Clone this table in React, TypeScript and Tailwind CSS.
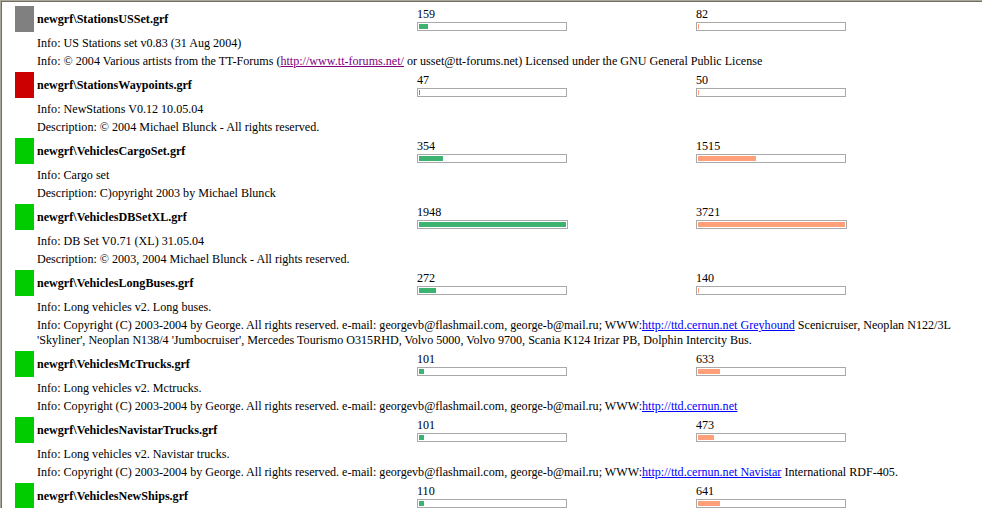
const CERNUN = 'Info: Copyright (C) 2003-2004 by George. All rights reserved. e-mail: georgevb@flashmail.com, george-b@mail.ru; WWW:';

type Entry = {
  name: string;
  status: string;
  a: number;
  aw: number;
  b: number;
  bw: number;
  info: React.ReactNode[];
};

const entries: Entry[] = [
  {
    name: 'newgrf\\StationsUSSet.grf', status: 'bg-[#808080]', a: 159, aw: 9, b: 82, bw: 1,
    info: [
      'Info: US Stations set v0.83 (31 Aug 2004)',
      <>
        Info: © 2004 Various artists from the TT-Forums (
        <a href="#" className="text-[#800080] underline">http://www.tt-forums.net/</a> or usset@tt-forums.net) Licensed under the GNU General Public License
      </>,
    ],
  },
  {
    name: 'newgrf\\StationsWaypoints.grf', status: 'bg-[#cc0000]', a: 47, aw: 1, b: 50, bw: 1,
    info: ['Info: NewStations V0.12 10.05.04', 'Description: © 2004 Michael Blunck - All rights reserved.'],
  },
  {
    name: 'newgrf\\VehiclesCargoSet.grf', status: 'bg-[#00cc00]', a: 354, aw: 24, b: 1515, bw: 58,
    info: ['Info: Cargo set', 'Description: C)opyright 2003 by Michael Blunck'],
  },
  {
    name: 'newgrf\\VehiclesDBSetXL.grf', status: 'bg-[#00cc00]', a: 1948, aw: 147, b: 3721, bw: 147,
    info: ['Info: DB Set V0.71 (XL) 31.05.04', 'Description: © 2003, 2004 Michael Blunck - All rights reserved.'],
  },
  {
    name: 'newgrf\\VehiclesLongBuses.grf', status: 'bg-[#00cc00]', a: 272, aw: 17, b: 140, bw: 1,
    info: [
      'Info: Long vehicles v2. Long buses.',
      <>
        {CERNUN}
        <a href="#" className="text-[#0000ff] underline">http://ttd.cernun.net Greyhound</a> Scenicruiser, Neoplan N122/3L 'Skyliner', Neoplan N138/4 'Jumbocruiser', Mercedes Tourismo O315RHD, Volvo 5000, Volvo 9700, Scania K124 Irizar PB, Dolphin Intercity Bus.
      </>,
    ],
  },
  {
    name: 'newgrf\\VehiclesMcTrucks.grf', status: 'bg-[#00cc00]', a: 101, aw: 5, b: 633, bw: 22,
    info: [
      'Info: Long vehicles v2. Mctrucks.',
      <>
        {CERNUN}
        <a href="#" className="text-[#0000ff] underline">http://ttd.cernun.net</a>
      </>,
    ],
  },
  {
    name: 'newgrf\\VehiclesNavistarTrucks.grf', status: 'bg-[#00cc00]', a: 101, aw: 5, b: 473, bw: 16,
    info: [
      'Info: Long vehicles v2. Navistar trucks.',
      <>
        {CERNUN}
        <a href="#" className="text-[#0000ff] underline">http://ttd.cernun.net Navistar</a> International RDF-405.
      </>,
    ],
  },
  {
    name: 'newgrf\\VehiclesNewShips.grf', status: 'bg-[#00cc00]', a: 110, aw: 5, b: 641, bw: 22,
    info: ['Info: Long vehicles v2. Ships.', CERNUN],
  },
];

const Bar = ({ value, fill, color }: { value: number; fill: number; color: string }) => (
  <div className="flex flex-col items-start">
    <span className="leading-[15px]">{value}</span>
    <div className="flex min-w-[150px] h-[9px] border border-[#a9a9a9] p-px">
      <div className={`h-[5px] shrink-0 ${color}`} style={{ width: fill }} />
    </div>
  </div>
);

export default function App() {
  return (
    <div className="h-[508px] w-[982px] overflow-hidden border-t border-l border-[#aca899] bg-white">
      <div className="h-full border-t border-l border-[#716f64] pl-[13px] pr-[30px] pt-[2px] font-['Liberation_Serif',serif] text-[12.1px] text-black">
        {entries.map((e) => (
          <div key={e.name} className="grid grid-cols-[22px_380px_279px_1fr]">
            <div className="flex h-[30px] items-start pt-[2px]">
              <div className={`h-[26px] w-[19px] ${e.status}`} />
            </div>
            <div className="flex h-[30px] items-center pb-[2px] pt-[2px] font-bold">{e.name}</div>
            <div className="pt-[3px]">
              <Bar value={e.a} fill={e.aw} color="bg-[#3cb371]" />
            </div>
            <div className="pt-[3px]">
              <Bar value={e.b} fill={e.bw} color="bg-[#ffa07a]" />
            </div>
            {e.info.map((line, i) => (
              <div key={i} className="col-start-2 col-span-3 pt-[2px] pb-px leading-[15px]">
                {line}
              </div>
            ))}
          </div>
        ))}
      </div>
    </div>
  );
}
